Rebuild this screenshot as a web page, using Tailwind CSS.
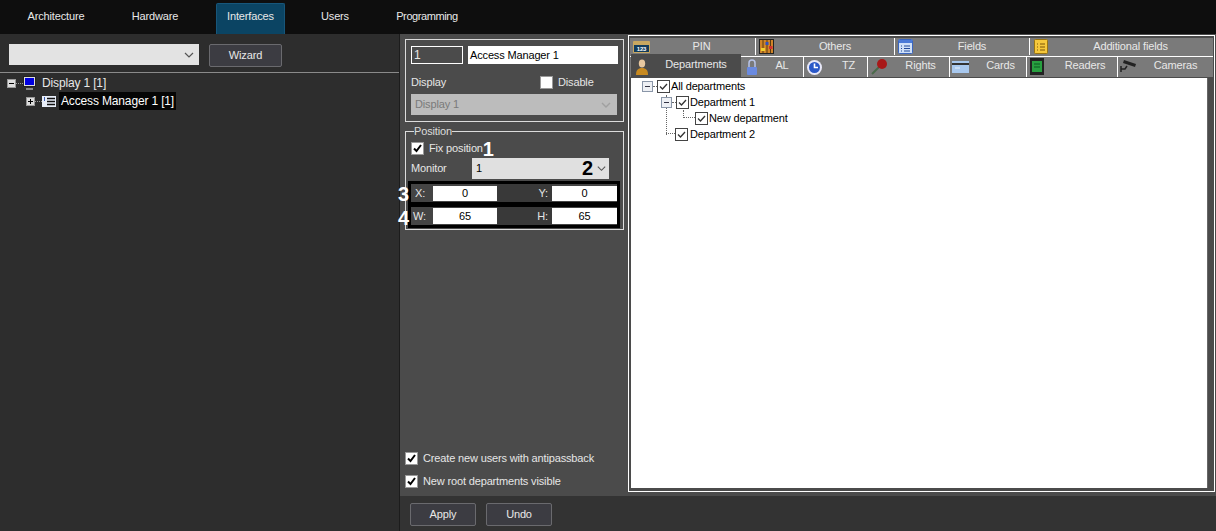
<!DOCTYPE html>
<html lang="en">
<head>
<meta charset="UTF-8">
<title>Access Manager interface</title>
<script src="https://cdn.jsdelivr.net/npm/@tailwindcss/browser@4"></script>
</head>
<body class="w-[1216px] h-[531px] overflow-hidden bg-[#2d2d2d] font-['Liberation_Sans',sans-serif] text-[11px] tracking-[-0.15px] leading-none text-[#e8e8e8]">

<!-- Top navigation -->
<nav class="h-[34px] bg-[#0e0e0e] pl-[13px] flex items-end">
  <a class="w-[86px] h-[30px] flex items-center justify-center pb-[5px]">Architecture</a>
  <a class="w-[112px] h-[30px] flex items-center justify-center pb-[5px]">Hardware</a>
  <a class="ml-[5px] w-[69px] h-[31px] flex items-center justify-center pb-[5px] bg-[#0b4463] border border-b-0 border-[#17567a] rounded-t-[2px]">Interfaces</a>
  <a class="w-[100px] h-[30px] flex items-center justify-center pb-[5px]">Users</a>
  <a class="w-[84px] h-[30px] flex items-center justify-center pb-[5px] tracking-[-0.4px]">Programming</a>
</nav>

<div class="flex h-[497px]">
  <!-- Left: display tree -->
  <aside class="w-[399px] shrink-0 bg-[#2d2d2d]">
    <div class="h-[39px] border-b border-[#8a8a8a] pl-[9px] pt-[10px] flex items-start gap-[10px]">
      <div class="w-[190px] h-[21px] bg-[#e3e3e3] flex items-center justify-end pr-[3px]">
        <svg class="w-[14px] h-[14px]" viewBox="0 0 14 14" fill="none" stroke="#555" stroke-width="1.2"><path d="M3 5l4 4 4-4"/></svg>
      </div>
      <button class="w-[73px] h-[23px] bg-[#3c3c42] border border-[#6a6a6e] rounded-[2px]">Wizard</button>
    </div>
    <div class="pl-[7px] pt-[1px] text-[12px]">
      <div class="flex items-center h-[18px]">
        <span class="w-[9px] h-[9px] bg-[#ddd] border border-[#999] flex items-center justify-center"><span class="w-[5px] h-[1px] bg-black"></span></span>
        <span class="w-[7px] border-t border-dotted border-[#999]"></span>
        <svg class="w-[13px] h-[15px]" viewBox="0 0 13 15"><rect x="0.5" y="0.5" width="12" height="10" fill="#dcdcdc" stroke="#222"/><rect x="2" y="2" width="9" height="7" fill="#0000e0"/><rect x="3" y="12" width="7" height="2" fill="#888"/></svg>
        <span class="ml-[6px]">Display 1 [1]</span>
      </div>
      <div class="flex items-center h-[18px] pl-[19px]">
        <span class="w-[9px] h-[9px] bg-[#ddd] border border-[#999] relative"><span class="absolute left-[1px] top-[3px] w-[5px] h-[1px] bg-black"></span><span class="absolute left-[3px] top-[1px] w-[1px] h-[5px] bg-black"></span></span>
        <span class="w-[7px] border-t border-dotted border-[#999]"></span>
        <svg class="w-[14px] h-[11px]" viewBox="0 0 14 11"><rect width="14" height="11" fill="#e8eef8"/><path d="M5 2.5h8M5 5.5h8M5 8.5h8" stroke="#111" stroke-width="1.4"/><path d="M2.5 1v4" stroke="#3858b0"/></svg>
        <span class="ml-[3px] bg-[#050505] h-[18px] px-[2px] flex items-center text-white">Access Manager 1 [1]</span>
      </div>
    </div>
  </aside>

  <!-- Middle and right -->
  <div class="flex-1 flex flex-col border-l border-[#1c1c1c]">
    <div class="h-[462px] flex bg-[#4b4b4b]">

      <!-- Settings column -->
      <section class="w-[228px] shrink-0 pl-[5px] pt-[5px] flex flex-col text-[#e6e6e6]">
        <div class="w-[219px] h-[83px] border border-[#dcdcdc] pl-[5px] pt-[6px]">
          <div class="flex gap-[5px]">
            <div class="w-[52px] h-[18px] border border-white flex items-center pl-[2px] text-[12px]">1</div>
            <div class="w-[150px] h-[18px] bg-white text-black flex items-center pl-[2px]">Access Manager 1</div>
          </div>
          <div class="flex items-center h-[18px] mt-[9px]">
            <span class="w-[129px]">Display</span>
            <span class="w-[13px] h-[13px] bg-white border border-[#999]"></span>
            <span class="ml-[5px]">Disable</span>
          </div>
          <div class="w-[206px] h-[21px] mt-[3px] bg-[#bcbcbc] text-[#7a7a7a] flex items-center justify-between pl-[4px] pr-[5px]">
            Display 1
            <svg class="w-[12px] h-[12px]" viewBox="0 0 12 12" fill="none" stroke="#a0a0a0" stroke-width="1.4"><path d="M2 4l4 4 4-4"/></svg>
          </div>
        </div>

        <fieldset class="relative w-[219px] h-[104px] mt-[4px] border border-[#dcdcdc] pl-[5px]">
          <legend class="ml-[3px] px-0 leading-none text-[#dcdcdc]">Position</legend>
          <div class="flex items-center h-[15px] mt-[4px]">
            <span class="w-[13px] h-[13px] bg-white border border-[#999] flex items-center justify-center">
              <svg class="w-[11px] h-[11px]" viewBox="0 0 11 11" fill="none" stroke="#000" stroke-width="2"><path d="M2 5.5l2.5 2.5L9 2"/></svg>
            </span>
            <span class="ml-[5px]">Fix position</span>
            <span class="font-bold text-[20px] text-white">1</span>
          </div>
          <div class="flex items-center h-[21px] mt-[2px]">
            <span class="w-[61px]">Monitor</span>
            <div class="w-[137px] h-[21px] bg-[#e0e0e0] text-black flex items-center pl-[4px] relative">1
              <span class="absolute right-[16px] top-[0px] font-bold text-[20px] text-black">2</span>
              <svg class="absolute right-[2px] top-[5px] w-[11px] h-[11px]" viewBox="0 0 12 12" fill="none" stroke="#555" stroke-width="1.2"><path d="M2 4l4 4 4-4"/></svg>
            </div>
          </div>
          <div class="flex items-center w-[212px] h-[24px] mt-[2px] -ml-[3px] border-[3px] border-black bg-[#444] pl-[4px]">
            <span class="w-[18px]">X:</span>
            <div class="w-[64px] h-[15px] bg-white text-black flex items-center justify-center">0</div>
            <span class="w-[55px] bg-[#393939] h-[18px] flex items-center justify-end pr-[4px]">Y:</span>
            <div class="w-[65px] h-[15px] bg-white text-black flex items-center justify-center">0</div>
          </div>
          <div class="flex items-center w-[212px] h-[24px] -mt-[1px] -ml-[3px] border-[3px] border-black bg-[#444] pl-[2px]">
            <span class="w-[20px]">W:</span>
            <div class="w-[64px] h-[16px] bg-white text-black flex items-center justify-center">65</div>
            <span class="w-[55px] bg-[#393939] h-[18px] flex items-center justify-end pr-[4px]">H:</span>
            <div class="w-[65px] h-[16px] bg-white text-black flex items-center justify-center">65</div>
          </div>
          <span class="absolute left-[-8px] top-[47px] font-bold text-[20px] text-white">3</span>
          <span class="absolute left-[-8px] top-[71px] font-bold text-[20px] text-white">4</span>
        </fieldset>

        <div class="mt-auto pb-[8px] flex flex-col gap-[9px]">
          <label class="flex items-center h-[14px]">
            <span class="w-[13px] h-[13px] bg-white border border-[#999] flex items-center justify-center">
              <svg class="w-[11px] h-[11px]" viewBox="0 0 11 11" fill="none" stroke="#000" stroke-width="2"><path d="M2 5.5l2.5 2.5L9 2"/></svg>
            </span>
            <span class="ml-[5px]">Create new users with antipassback</span>
          </label>
          <label class="flex items-center h-[14px]">
            <span class="w-[13px] h-[13px] bg-white border border-[#999] flex items-center justify-center">
              <svg class="w-[11px] h-[11px]" viewBox="0 0 11 11" fill="none" stroke="#000" stroke-width="2"><path d="M2 5.5l2.5 2.5L9 2"/></svg>
            </span>
            <span class="ml-[5px]">New root departments visible</span>
          </label>
        </div>
      </section>

      <!-- Tabbed tree panel -->
      <section class="w-[587px] h-[457px] mt-[1px] border border-white p-[1px] bg-[#4b4b4b] flex flex-col">
        <div class="flex h-[18px] pl-[1px] bg-[#7a7a7a] text-[#e8e8e8] mt-[1px] pb-[1px]">
          <div class="w-[125px] border-r border-white relative flex items-center justify-center pl-[17px]">
            <svg class="absolute left-[2px] top-[3px] w-[17px] h-[12px]" viewBox="0 0 17 12"><rect width="17" height="12" rx="1" fill="#c8a860"/><rect x="1" y="4" width="15" height="7" fill="#123c5c"/><text x="8.5" y="10" font-size="6" text-anchor="middle" fill="#fff" font-family="Liberation Sans" font-weight="bold">123</text></svg>
            PIN</div>
          <div class="w-[139px] border-r border-white relative flex items-center justify-center pl-[20px]">
            <svg class="absolute left-[3px] top-[1px] w-[15px] h-[15px]" viewBox="0 0 15 15"><rect x="0.5" y="0.5" width="14" height="14" fill="#d08428" stroke="#222"/><path d="M4 1v13M8 1v13M11.5 1v13" stroke="#5a3a10"/><rect x="2" y="9" width="4" height="3" fill="#f0d030"/><rect x="6.5" y="3" width="3" height="3" fill="#3050c0"/><rect x="10" y="7" width="3.5" height="3" fill="#d03030"/></svg>
            Others</div>
          <div class="w-[135px] border-r border-white relative flex items-center justify-center pl-[20px]">
            <svg class="absolute left-[3px] top-[1px] w-[15px] h-[15px]" viewBox="0 0 15 15"><rect x="0.5" y="0.5" width="14" height="14" rx="1" fill="#cfe0f8" stroke="#3a66c0"/><rect x="1" y="1" width="13" height="3" fill="#4a7ad8"/><path d="M3 7h1M6 7h6M3 9.5h1M6 9.5h6M3 12h1M6 12h6" stroke="#224a9a"/></svg>
            Fields</div>
          <div class="flex-1 relative flex items-center justify-center pl-[18px]">
            <svg class="absolute left-[4px] top-[1px] w-[14px] h-[15px]" viewBox="0 0 14 15"><rect x="0.5" y="0.5" width="13" height="14" rx="1" fill="#f6c83c" stroke="#9a7410"/><path d="M3 5h1M6 5h5M3 8h1M6 8h5M3 11h1M6 11h5" stroke="#7a5408"/></svg>
            Additional fields</div>
        </div>
        <div class="flex h-[21px] pl-[1px] bg-[#7a7a7a] text-[#e8e8e8] border-t border-white pb-[4px]">
          <div class="w-[110px] -mt-[3px] h-[24px] bg-[#4b4b4b] relative flex items-center justify-center pl-[20px] pb-[3px]">
            <svg class="absolute left-[4px] top-[5px] w-[14px] h-[16px]" viewBox="0 0 14 16"><ellipse cx="7" cy="4.5" rx="3.2" ry="4" fill="#e8c8a0"/><path d="M1 16c0-5 2-7 6-7s6 2 6 7z" fill="#c88a20"/></svg>
            Departments</div>
          <div class="w-[63px] border-r border-white relative flex items-center justify-center pl-[20px] -mb-[4px] pb-[4px]">
            <svg class="absolute left-[5px] top-[2px] w-[12px] h-[17px]" viewBox="0 0 12 17"><path d="M3 8V4a3 3 0 0 1 6 0v4" fill="none" stroke="#b8c4e8" stroke-width="1.5"/><rect x="1" y="8" width="10" height="8" rx="1" fill="#6a8ae0"/></svg>
            AL</div>
          <div class="w-[64px] border-r border-white relative flex items-center justify-center pl-[26px] -mb-[4px] pb-[4px]">
            <svg class="absolute left-[3px] top-[3px] w-[15px] h-[15px]" viewBox="0 0 15 15"><circle cx="7.5" cy="7.5" r="7.5" fill="#e8e8f8"/><circle cx="7.5" cy="7.5" r="5.5" fill="#2a58c8"/><path d="M7.5 3.5v4h3.5" stroke="#fff" stroke-width="1.6" fill="none"/></svg>
            TZ</div>
          <div class="w-[82px] border-r border-white relative flex items-center justify-center pl-[24px] -mb-[4px] pb-[4px]">
            <svg class="absolute left-[3px] top-[1px] w-[17px] h-[17px]" viewBox="0 0 17 17"><path d="M1 16l7-7" stroke="#4a6a4a" stroke-width="2"/><circle cx="11" cy="6" r="5" fill="#a81818"/></svg>
            Rights</div>
          <div class="w-[77px] border-r border-white relative flex items-center justify-center pl-[25px] -mb-[4px] pb-[4px]">
            <svg class="absolute left-[2px] top-[4px] w-[17px] h-[12px]" viewBox="0 0 17 12"><rect width="17" height="12" fill="#a8c8ee"/><rect y="2" width="17" height="2" fill="#333"/><path d="M3 7h5" stroke="#e8f0fa"/></svg>
            Cards</div>
          <div class="w-[91px] border-r border-white relative flex items-center justify-center pl-[26px] -mb-[4px] pb-[4px]">
            <svg class="absolute left-[3px] top-[0px] w-[14px] h-[19px]" viewBox="0 0 14 19"><rect y="1" width="14" height="17" fill="#222"/><rect x="2" y="4" width="10" height="11" fill="#28a040"/><path d="M4 7h6M4 10h6" stroke="#0a5a20"/></svg>
            Readers</div>
          <div class="flex-1 relative flex items-center justify-center pl-[20px] -mb-[4px] pb-[4px]">
            <svg class="absolute left-[2px] top-[2px] w-[17px] h-[14px]" viewBox="0 0 17 14"><path d="M4 1l12 4-1 3L3 4z" fill="#222"/><path d="M1 7v6M1 10h4l2-3" stroke="#222" stroke-width="1.5" fill="none"/></svg>
            Cameras</div>
        </div>
        <div class="mt-[1px] ml-[1px] w-[577px] h-[410px] bg-white border-r border-[#666] text-black pl-[11px] relative">
          <div class="flex items-center h-[16px]">
            <span class="w-[11px] h-[11px] border border-[#8a96a8] bg-[#eef0f4] flex items-center justify-center"><span class="w-[5px] h-[1px] bg-[#334]"></span></span>
            <span class="w-[4px] border-t border-dotted border-[#666]"></span>
            <span class="w-[13px] h-[13px] border border-[#444] flex items-center justify-center"><svg class="w-[11px] h-[11px]" viewBox="0 0 11 11" fill="none" stroke="#333" stroke-width="1.3"><path d="M2 5.5l2.5 2.5L9 3"/></svg></span>
            <span class="ml-[1px]">All departments</span>
          </div>
          <div class="flex items-center h-[16px] pl-[19px]">
            <span class="relative z-10 w-[11px] h-[11px] border border-[#8a96a8] bg-[#eef0f4] flex items-center justify-center"><span class="w-[5px] h-[1px] bg-[#334]"></span></span>
            <span class="w-[4px] border-t border-dotted border-[#666]"></span>
            <span class="w-[13px] h-[13px] border border-[#444] flex items-center justify-center"><svg class="w-[11px] h-[11px]" viewBox="0 0 11 11" fill="none" stroke="#333" stroke-width="1.3"><path d="M2 5.5l2.5 2.5L9 3"/></svg></span>
            <span class="ml-[1px]">Department 1</span>
          </div>
          <div class="flex items-center h-[16px] pl-[41px]">
            <span class="w-[12px] h-[8px] -mt-[8px] border-l border-b border-dotted border-[#666]"></span>
            <span class="w-[13px] h-[13px] border border-[#444] flex items-center justify-center"><svg class="w-[11px] h-[11px]" viewBox="0 0 11 11" fill="none" stroke="#333" stroke-width="1.3"><path d="M2 5.5l2.5 2.5L9 3"/></svg></span>
            <span class="ml-[1px]">New department</span>
          </div>
          <div class="flex items-center h-[16px] pl-[24px]">
            <span class="w-[9px] h-[8px] -mt-[8px] border-b border-dotted border-[#666]"></span>
            <span class="w-[13px] h-[13px] border border-[#444] flex items-center justify-center"><svg class="w-[11px] h-[11px]" viewBox="0 0 11 11" fill="none" stroke="#333" stroke-width="1.3"><path d="M2 5.5l2.5 2.5L9 3"/></svg></span>
            <span class="ml-[2px]">Department 2</span>
          </div>
          <span class="absolute left-[35px] top-[17px] h-[40px] border-l border-dotted border-[#666]"></span>
        </div>
      </section>
    </div>

    <!-- Footer buttons -->
    <footer class="h-[35px] bg-[#333333] pl-[10px] pt-[7px] flex gap-[10px] items-start">
      <button class="w-[66px] h-[23px] bg-[#3c3c42] border border-[#6a6a6e] rounded-[2px]">Apply</button>
      <button class="w-[66px] h-[23px] bg-[#3c3c42] border border-[#6a6a6e] rounded-[2px]">Undo</button>
    </footer>
  </div>
</div>
</body>
</html>
